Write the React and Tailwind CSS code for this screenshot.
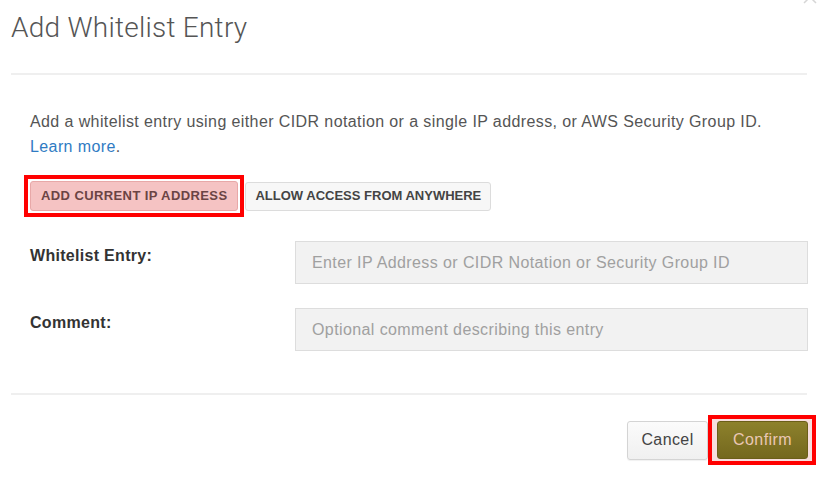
export default function App() {
  return (
    <div className="relative w-[827px] h-[478px] bg-white overflow-hidden" style={{ fontFamily: '"Liberation Sans", Arial, sans-serif' }}>
      <div className="absolute right-[10px] -top-[6px] leading-none">
        <svg width="14" height="10" viewBox="0 0 14 10" fill="none" stroke="#d6d6d6" strokeWidth="1.5"><path d="M1 9 L7 3 L13 9" /></svg>
      </div>
      <div className="flex flex-col px-[11px]">
        <div className="pt-[10px] pb-[27px] text-[28px] leading-[36px] text-[#555] font-light tracking-[0.25px]" style={{ fontFamily: 'Roboto, "Liberation Sans", sans-serif' }}>
          Add Whitelist Entry
        </div>
        <div className="h-[2px] bg-[#efefef] mr-[9px]" />
        <div className="flex flex-col pl-[19px] pt-[34px] mr-[8px]">
          <p className="text-[16px] leading-[25px] text-[#555] tracking-[0.4px]">
            Add a whitelist entry using either CIDR notation or a single IP address, or AWS Security Group ID.
            <br />
            <span className="text-[#2f7bc3]">Learn more</span>.
          </p>
          <div className="flex items-center mt-[16px] -ml-[6px]">
            <div className="border-[4px] border-[#ff0000] p-[2px]">
              <div className="h-[30px] px-[10px] flex items-center rounded-[3px] border border-[#e8a8a8] bg-[#f5c3c3] text-[13px] font-bold text-[#6b4444] tracking-[0.4px]">
                ADD CURRENT IP ADDRESS
              </div>
            </div>
            <div className="ml-[1px] h-[29px] px-[9px] flex items-center rounded-[3px] border border-[#dcdcdc] bg-[#f7f7f7] text-[13px] font-bold text-[#444]">
              ALLOW ACCESS FROM ANYWHERE
            </div>
          </div>
          <div className="flex items-start mt-[24px]">
            <div className="w-[265px] pt-[3px] text-[16px] font-bold text-[#333] tracking-[0.3px]">Whitelist Entry:</div>
            <div className="flex-1 h-[43px] flex items-center pl-[16px] bg-[#f2f2f2] border border-[#dddddd] text-[16px] text-[#a0a0a0] tracking-[0.4px]">
              Enter IP Address or CIDR Notation or Security Group ID
            </div>
          </div>
          <div className="flex items-start mt-[24px]">
            <div className="w-[265px] pt-[3px] text-[16px] font-bold text-[#333] tracking-[0.3px]">Comment:</div>
            <div className="flex-1 h-[43px] flex items-center pl-[16px] bg-[#f2f2f2] border border-[#dddddd] text-[16px] text-[#a0a0a0] tracking-[0.4px]">
              Optional comment describing this entry
            </div>
          </div>
        </div>
        <div className="h-[2px] bg-[#efefef] mr-[9px] mt-[42px]" />
        <div className="flex justify-end items-center mt-[20px] mr-[0px]">
          <div className="h-[39px] w-[81px] justify-center flex items-center rounded-[3px] border border-[#d4d4d4] bg-gradient-to-b from-[#fbfbfb] to-[#f0f0f0] text-[16px] text-[#444] tracking-[0.4px] shadow-[0_1px_1px_rgba(0,0,0,0.06)]">
            Cancel
          </div>
          <div className="border-[4px] border-[#ff0000] bg-[#f7dede] pl-[5px] pr-[4px] py-[2px]">
            <div className="h-[38px] w-[91px] justify-center flex items-center rounded-[3px] border border-[#6b5f18] bg-gradient-to-b from-[#8d812c] to-[#74681e] text-[16px] text-[#eac7b4] tracking-[0.4px]">
              Confirm
            </div>
          </div>
        </div>
      </div>
    </div>
  );
}
